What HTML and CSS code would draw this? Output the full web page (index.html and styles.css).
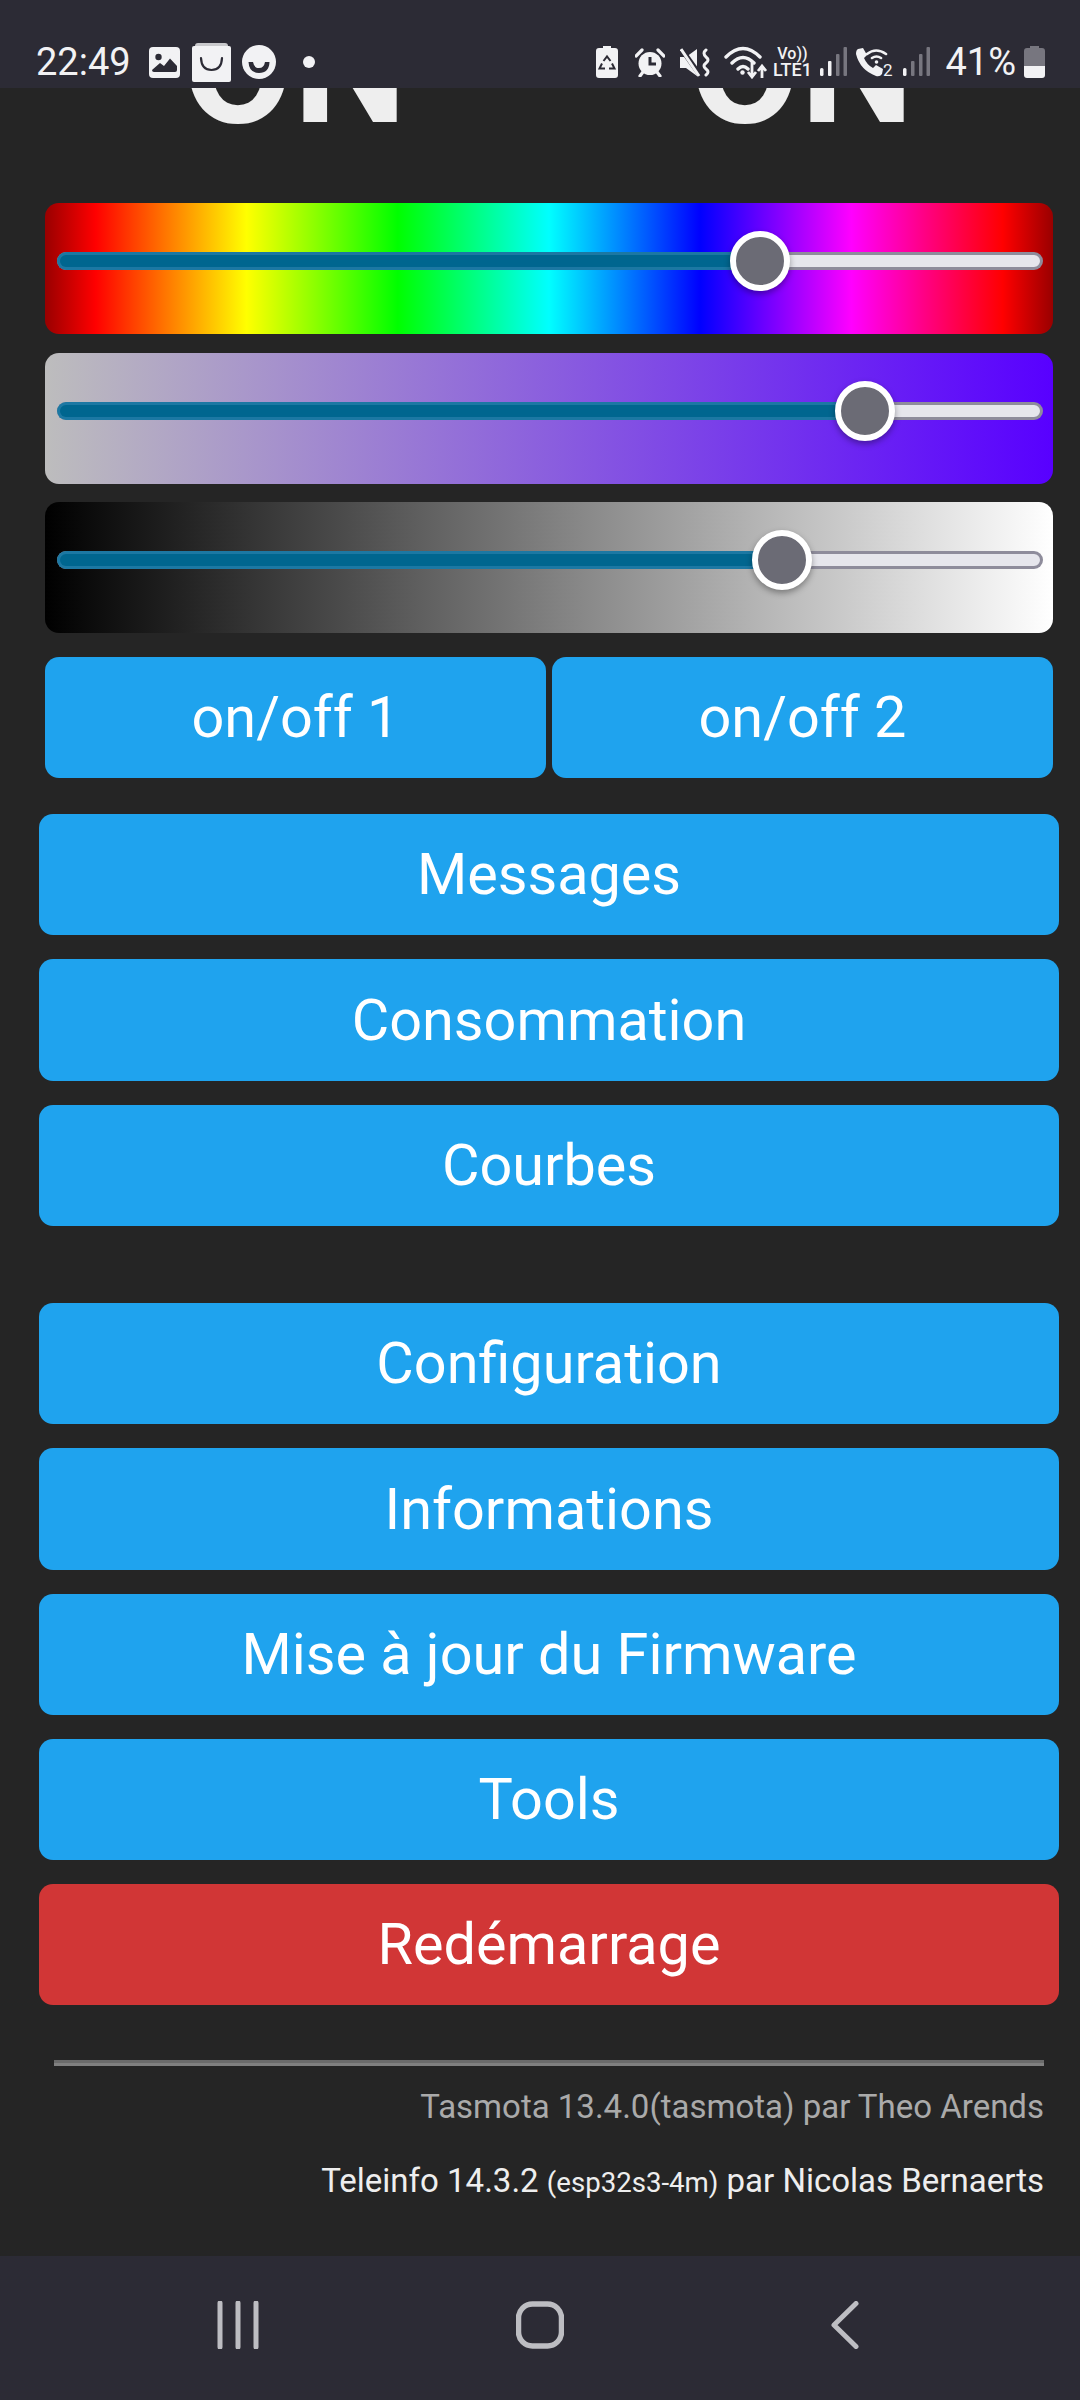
FILE: index.html
```html
<!DOCTYPE html>
<html lang="fr">
<head>
  <meta charset="UTF-8">
  <meta name="viewport" content="width=device-width, initial-scale=1.0">
  <title>Teleinfo</title>
  <link rel="stylesheet" href="styles.css">
</head>
<body>
  <div class="phone">
    <div class="status-bar">
      <div class="status-left">
        <span class="clock">22:49</span>
        <svg class="ic-image" viewBox="0 0 31 31"><rect width="31" height="31" rx="4" fill="#f2f2f4"/><circle cx="9.500" cy="10" r="3.200" fill="#2c2b35"/><path d="M3 23 L11 16 L15 19 L21 11.500 L28 19 V23 Q28 25 26 25 H5 Q3 25 3 23 Z" fill="#2c2b35"/></svg>
        <svg class="ic-bag" viewBox="0 0 39 39"><path d="M3 3 Q3 0 6 0 H33 Q36 0 36 3 Z" fill="#c9c9cc"/><rect y="3" width="39" height="36" rx="2" fill="#f2f2f4"/><path d="M9 15 Q9.500 27 19.500 27 Q29.500 27 30 15" fill="none" stroke="#2c2b35" stroke-width="2.200" stroke-linecap="round"/></svg>
        <svg class="ic-smile" viewBox="0 0 34 34"><circle cx="17" cy="17" r="17" fill="#f2f2f4"/><path d="M6.500 17 H11 Q12 23 17 23 Q22 23 23 17 H27.500 Q27 28 17 28 Q7 28 6.500 17 Z" fill="#2c2b35"/></svg>
        <span class="dot"></span>
      </div>
      <div class="status-right">
        <svg class="ic-batsave" viewBox="0 0 22 32"><path d="M7 0 H15 V2 H19 Q22 2 22 5 V29 Q22 32 19 32 H3 Q0 32 0 29 V5 Q0 2 3 2 H7 Z" fill="#f2f2f4"/><path d="M7.500 15 L11 10.500 L14.500 15 M16 17.500 L18.500 22.500 H13 M6 17.500 L3.500 22.500 H9" fill="none" stroke="#2c2b35" stroke-width="2"/></svg>
        <svg class="ic-alarm" viewBox="0 0 30 29"><circle cx="15" cy="15.500" r="11.500" fill="#f2f2f4"/><path d="M1 8 L7 2 M29 8 L23 2 M5 28 L8 24 M25 28 L22 24" stroke="#f2f2f4" stroke-width="3.200" stroke-linecap="round"/><path d="M15 9 V16 H21" fill="none" stroke="#2c2b35" stroke-width="3"/></svg>
        <svg class="ic-mute" viewBox="0 0 30 29"><path d="M0 9 H6 L17 1 V28 L6 20 H0 Z" fill="#f2f2f4"/><path d="M0 -1 L20 27" stroke="#2c2b35" stroke-width="5"/><path d="M1 1 L19 28" stroke="#f2f2f4" stroke-width="3"/><path d="M26 2 Q22 5 26 9 Q30 12 26 15 Q22 18 26 21 Q30 24 26 27" fill="none" stroke="#f2f2f4" stroke-width="3" stroke-linecap="round"/></svg>
        <svg class="ic-wifi" viewBox="0 0 43 34"><path d="M2 12 Q19 -5 36 12 M8 18 Q19 7 30 18 M14 24 Q19 19 24 24" fill="none" stroke="#f2f2f4" stroke-width="3.400" stroke-linecap="round"/><circle cx="18.500" cy="27.500" r="2.200" fill="#f2f2f4"/><path d="M28 17 V31 M24 27 L28 32 L32 27" fill="none" stroke="#f2f2f4" stroke-width="2.800"/><path d="M38 33 V22 M34 26 L38 21 L42 26" fill="none" stroke="#f2f2f4" stroke-width="2.800"/></svg>
        <div class="volte"><span class="vo">Vo))</span><span class="lte">LTE1</span></div>
        <svg class="ic-signal" viewBox="0 0 27 30"><rect x="0" y="21" width="3.500" height="8" rx="1.500" fill="#f2f2f4"/><rect x="8" y="14" width="3.500" height="15" rx="1" fill="#f2f2f4"/><rect x="16" y="7" width="3.500" height="22" rx="1" fill="#77767f"/><rect x="23.500" y="0" width="3.500" height="29" rx="1" fill="#77767f"/></svg>
        <svg class="ic-call" viewBox="0 0 38 29"><path d="M2 1 L7 0 L11 7 L8 10 Q11 17 17 20 L20 17 L27 21 L26 26 Q24 29 20 28 Q4 22 0 6 Q0 2 2 1 Z" fill="#f2f2f4"/><path d="M11 6 Q20 -1 30 6 M16 10 Q20.500 7 25 10" fill="none" stroke="#f2f2f4" stroke-width="2.600" stroke-linecap="round"/><circle cx="20.500" cy="14" r="1.800" fill="#f2f2f4"/><text class="sim" x="27" y="28">2</text></svg>
        <svg class="ic-signal" viewBox="0 0 27 30"><rect x="0" y="21" width="3.500" height="8" rx="1.500" fill="#f2f2f4"/><rect x="8" y="14" width="3.500" height="15" rx="1" fill="#77767f"/><rect x="16" y="7" width="3.500" height="22" rx="1" fill="#77767f"/><rect x="23.500" y="0" width="3.500" height="29" rx="1" fill="#77767f"/></svg>
        <span class="battery-pct">41%</span>
        <svg class="ic-battery" viewBox="0 0 21 32"><path d="M6 0 H15 V2 H18 Q21 2 21 5 V20 H0 V5 Q0 2 3 2 H6 Z" fill="#77767f"/><path d="M0 20 H21 V29 Q21 32 18 32 H3 Q0 32 0 29 Z" fill="#f2f2f4"/></svg>
      </div>
    </div>

    <div class="content">
      <div class="states">
        <div class="state">ON</div>
        <div class="state">ON</div>
      </div>

      <div class="sliders">
        <div class="slider-box hue">
          <div class="track"><div class="fill" style="width: 71.4%"></div><div class="thumb" style="left: 71.4%"></div></div>
        </div>
        <div class="slider-box sat">
          <div class="track"><div class="fill" style="width: 82.1%"></div><div class="thumb" style="left: 82.1%"></div></div>
        </div>
        <div class="slider-box bri">
          <div class="track"><div class="fill" style="width: 73.7%"></div><div class="thumb" style="left: 73.7%"></div></div>
        </div>
      </div>

      <div class="toggles">
        <button class="btn">on/off 1</button>
        <button class="btn">on/off 2</button>
      </div>

      <div class="btn-group">
        <button class="btn">Messages</button>
        <button class="btn">Consommation</button>
        <button class="btn">Courbes</button>
      </div>

      <div class="btn-group menu">
        <button class="btn">Configuration</button>
        <button class="btn">Informations</button>
        <button class="btn">Mise à jour du Firmware</button>
        <button class="btn">Tools</button>
        <button class="btn btn-red">Redémarrage</button>
      </div>

      <div class="footer">
        <div class="rule"></div>
        <div class="credit-dim">Tasmota 13.4.0(tasmota) par Theo Arends</div>
        <div class="credit">Teleinfo 14.3.2 <small>(esp32s3-4m)</small> par Nicolas Bernaerts</div>
      </div>
    </div>

    <div class="nav-bar">
      <svg class="nav-recent" viewBox="0 0 44 48"><path d="M4 2 V46 M22 2 V46 M40 2 V46" fill="none" stroke="#bdbdc2" stroke-width="5" stroke-linecap="round"/></svg>
      <svg class="nav-home" viewBox="0 0 48 48"><rect x="2.500" y="3" width="43" height="42" rx="14" fill="none" stroke="#bdbdc2" stroke-width="5.500"/></svg>
      <svg class="nav-back" viewBox="0 0 28 48"><path d="M25 2.500 L3 24 L25 45.500" fill="none" stroke="#bdbdc2" stroke-width="5" stroke-linecap="round" stroke-linejoin="round"/></svg>
    </div>
  </div>
</body>
</html>
```

FILE: styles.css
```css
* {
  box-sizing: border-box;
}

body {
  margin: 0;
  background-color: #252525;
  color: #fff;
  font-family: Roboto, "Liberation Sans", sans-serif;
}

.phone {
  display: flex;
  flex-direction: column;
  width: 1080px;
  height: 2400px;
  overflow: hidden;
}

/* Status bar */
.status-bar {
  flex: 0 0 88px;
  display: flex;
  justify-content: space-between;
  align-items: center;
  padding: 36px 35px 0 36px;
  background-color: #2c2b35;
  color: #f2f2f4;
  position: relative;
  z-index: 1;
}

.status-left, .status-right {
  display: flex;
  align-items: center;
}

.clock {
  font-size: 38px;
  line-height: 44px;
  width: 113px;
}

.ic-image { width: 31px; height: 31px; margin-right: 12px; }
.ic-bag { width: 39px; height: 39px; margin-right: 11px; }
.ic-smile { width: 34px; height: 34px; margin-right: 27px; }

.dot {
  width: 12px;
  height: 12px;
  border-radius: 50%;
  background-color: #f2f2f4;
}

.ic-batsave { width: 22px; height: 32px; margin-right: 17px; }
.ic-alarm { width: 30px; height: 29px; margin-right: 15px; }
.ic-mute { width: 30px; height: 29px; margin-right: 14px; }
.ic-wifi { width: 43px; height: 34px; margin-right: 6px; }
.ic-signal { width: 27px; height: 30px; }
.ic-call { width: 38px; height: 29px; margin: 0 9px; }
.ic-battery { width: 21px; height: 32px; margin-left: 8px; }

.sim {
  font-size: 17px;
  fill: #f2f2f4;
}

.volte {
  display: flex;
  flex-direction: column;
  align-items: center;
  width: 38px;
  margin-right: 9px;
  font-weight: 500;
}

.vo {
  font-size: 16px;
  line-height: 15px;
}

.lte {
  font-size: 18px;
  line-height: 17px;
}

.battery-pct {
  font-size: 38px;
  line-height: 44px;
  margin-left: 15px;
}

/* Page */
.content {
  flex: 1;
  overflow: hidden;
  padding: 0 21px 0 39px;
}

.states {
  display: flex;
  height: 34px;
  margin-bottom: 81px;
  padding-left: 2px;
}

.state {
  flex: 0 0 507px;
  text-align: center;
  font-size: 161px;
  font-weight: 700;
  line-height: 161px;
  margin-top: -101px;
  color: #eee;
}

.sliders {
  display: flex;
  flex-direction: column;
  gap: 18.500px;
  margin: 0 6px;
}

.slider-box {
  height: 131px;
  padding: 49px 10px 0 12px;
  border-radius: 14px;
}

.hue {
  background: linear-gradient(to right, #900 0%, #f00 5%, #ff0 20%, #0f0 35%, #0ff 50%, #00f 65%, #f0f 80%, #f00 95%, #900 100%);
}

.sat {
  background: linear-gradient(to right, #bdbdbd, #5800ff);
}

.bri {
  background: linear-gradient(to right, #000, #fff);
}

.track {
  position: relative;
  height: 18px;
  border: 3px solid rgba(70, 65, 90, 0.55);
  border-radius: 9px;
  background-color: #e6e6ec;
}

.fill {
  height: 18px;
  margin: -3px 0 0 -3px;
  border: 3px solid #1c78a3;
  border-right: none;
  border-radius: 9px 0 0 9px;
  background-color: #00668f;
}

.thumb {
  position: absolute;
  top: 6px;
  width: 60px;
  height: 60px;
  margin: -30px 0 0 -30px;
  border: 6px solid #fff;
  border-radius: 50%;
  background-color: #6b6b75;
  box-shadow: 0 3px 6px rgba(0, 0, 0, 0.35);
}

.toggles {
  display: flex;
  gap: 6px;
  margin: 24px 6px 36px;
}

.btn-group {
  display: flex;
  flex-direction: column;
  gap: 24.100px;
}

.menu {
  margin-top: 77.200px;
}

.btn {
  display: block;
  width: 100%;
  height: 121.200px;
  padding: 0;
  border: none;
  border-radius: 14px;
  background-color: #1fa3ee;
  color: #fff;
  font-family: inherit;
  font-size: 57.600px;
}

.toggles .btn {
  flex: 1;
  width: auto;
}

.btn-red {
  background-color: #d13636;
}

.footer {
  margin: 55px 15px 0;
  text-align: right;
  font-size: 33px;
}

.rule {
  height: 6px;
  background-color: #6b6b6b;
  border-bottom: 3px solid #808080;
  margin-bottom: 21px;
}

.credit-dim {
  color: #aaa;
  line-height: 40px;
  margin-bottom: 34px;
}

.credit {
  color: #eee;
  line-height: 40px;
}

.credit small {
  font-size: 27.600px;
}

/* Nav bar */
.nav-bar {
  flex: 0 0 144px;
  display: flex;
  align-items: flex-start;
  padding: 45px 0 0 216px;
  background-color: #2c2b35;
}

.nav-recent { width: 44px; height: 48px; margin-right: 256px; }
.nav-home { width: 48px; height: 48px; margin-right: 267px; }
.nav-back { width: 28px; height: 48px; }
```
